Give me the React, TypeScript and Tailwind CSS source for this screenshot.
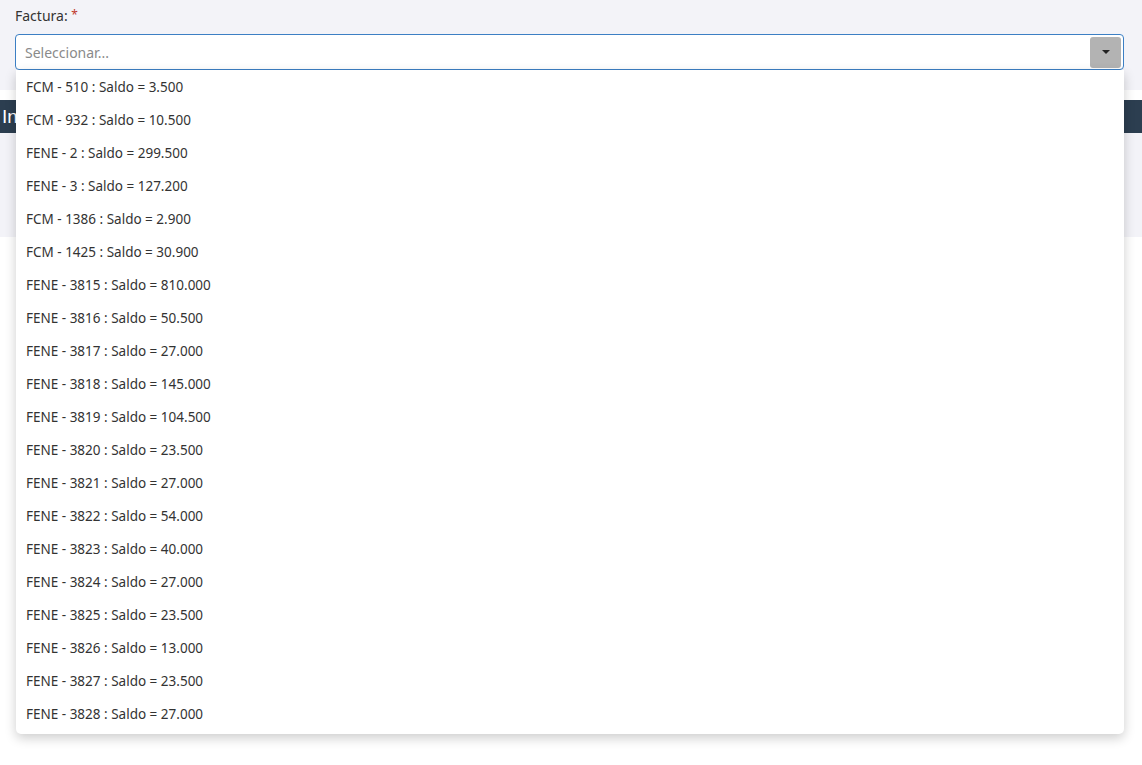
const FACTURAS = [
  "FCM - 510 : Saldo = 3.500",
  "FCM - 932 : Saldo = 10.500",
  "FENE - 2 : Saldo = 299.500",
  "FENE - 3 : Saldo = 127.200",
  "FCM - 1386 : Saldo = 2.900",
  "FCM - 1425 : Saldo = 30.900",
  "FENE - 3815 : Saldo = 810.000",
  "FENE - 3816 : Saldo = 50.500",
  "FENE - 3817 : Saldo = 27.000",
  "FENE - 3818 : Saldo = 145.000",
  "FENE - 3819 : Saldo = 104.500",
  "FENE - 3820 : Saldo = 23.500",
  "FENE - 3821 : Saldo = 27.000",
  "FENE - 3822 : Saldo = 54.000",
  "FENE - 3823 : Saldo = 40.000",
  "FENE - 3824 : Saldo = 27.000",
  "FENE - 3825 : Saldo = 23.500",
  "FENE - 3826 : Saldo = 13.000",
  "FENE - 3827 : Saldo = 23.500",
  "FENE - 3828 : Saldo = 27.000",
];

export default function App() {
  return (
    <div className="min-h-[765px] bg-white font-['Noto_Sans',sans-serif] text-[#333]">
      {/* formulario */}
      <div className="bg-[#f3f3f8] h-[90px] pl-[15px] pr-[18px] pt-[6px]">
        <label className="block h-[20px] text-[14px] leading-[20px]">
          Factura: <span className="relative -top-[2px] text-[12px] leading-none text-[#c0392b]">*</span>
        </label>
        <div className="relative mt-[8px]">
          <div className="flex h-[36px] items-center rounded-[4px] border border-[#3c7fc4] bg-white pl-[9px] pr-[2px]">
            <span className="flex-1 text-[14px] text-[#8a8a8a]">Seleccionar...</span>
            <span className="flex h-[31px] w-[31px] items-center justify-center rounded-[3px] bg-[#b3b3b3]">
              <span className="h-0 w-0 border-x-[4px] border-t-[4px] border-x-transparent border-t-[#222]" />
            </span>
          </div>

          {/* lista desplegable */}
          <ul className="absolute left-[1px] right-0 top-[36px] z-10 rounded-b-[5px] bg-white pb-[4px] shadow-[0_4px_12px_rgba(0,0,0,0.2)]">
            {FACTURAS.map((f) => (
              <li key={f} className="h-[33px] px-[10px] pt-[1px] text-[13.5px] leading-[33px]">
                {f}
              </li>
            ))}
          </ul>
        </div>
      </div>

      {/* panel de abajo */}
      <div className="pt-[10px]">
        <div className="h-[33px] bg-[#2c3e50] pl-[2px] font-['Liberation_Sans',sans-serif] text-[19px] leading-[33px] text-white">
          Información de la factura
        </div>
        <div className="h-[104px] bg-[#f3f3f8]" />
      </div>
    </div>
  );
}
